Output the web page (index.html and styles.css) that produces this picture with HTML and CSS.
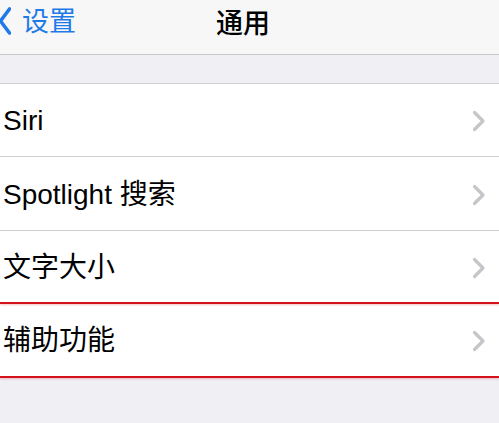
FILE: index.html
```html
<!DOCTYPE html>
<html lang="zh">
<head>
<meta charset="utf-8">
<link rel="stylesheet" href="styles.css">
</head>
<body>
<div class="screen">
  <header class="nav">
    <div class="back">
      <svg class="back-icon" width="12" height="28" viewBox="0 0 12 28"><path d="M10.5 2 L1.5 14 L10.5 26" fill="none" stroke="#1f7ae8" stroke-width="3.6" stroke-linecap="round" stroke-linejoin="round"/></svg>
      <span class="back-text">设置</span>
    </div>
    <div class="title">通用</div>
  </header>
  <div class="spacer"></div>
  <ul class="list">
    <li class="row row-a"><span class="label">Siri</span><svg class="chev" width="14" height="22" viewBox="0 0 14 22"><path d="M2.5 2.5 L11 11 L2.5 19.5" fill="none" stroke="#c6c6ca" stroke-width="3.2" stroke-linecap="round" stroke-linejoin="round"/></svg></li>
    <li class="row row-b"><span class="label">Spotlight 搜索</span><svg class="chev" width="14" height="22" viewBox="0 0 14 22"><path d="M2.5 2.5 L11 11 L2.5 19.5" fill="none" stroke="#c6c6ca" stroke-width="3.2" stroke-linecap="round" stroke-linejoin="round"/></svg></li>
    <li class="row row-before-mark"><span class="label">文字大小</span><svg class="chev" width="14" height="22" viewBox="0 0 14 22"><path d="M2.5 2.5 L11 11 L2.5 19.5" fill="none" stroke="#c6c6ca" stroke-width="3.2" stroke-linecap="round" stroke-linejoin="round"/></svg></li>
    <li class="row row-marked"><span class="label">辅助功能</span><svg class="chev" width="14" height="22" viewBox="0 0 14 22"><path d="M2.5 2.5 L11 11 L2.5 19.5" fill="none" stroke="#c6c6ca" stroke-width="3.2" stroke-linecap="round" stroke-linejoin="round"/></svg></li>
  </ul>
</div>
</body>
</html>
```
FILE: styles.css
```css
* { box-sizing: border-box; }
html, body { margin: 0; padding: 0; }
body {
  width: 499px;
  height: 423px;
  overflow: hidden;
  background: #efeff4;
  font-family: "Liberation Sans", "Noto Sans CJK SC", sans-serif;
  color: #000;
}
.screen { width: 499px; }
.nav {
  height: 55px;
  background: #f7f7f8;
  border-bottom: 1px solid #c9c9cc;
  display: flex;
  align-items: flex-start;
  padding-top: 4px;
}
.back {
  display: flex;
  align-items: center;
  width: 216px;
  color: #1f7ae8;
}
.back-icon { margin-left: -1px; margin-top: 3px; }
.back-text {
  margin-left: 11px;
  font-size: 27px;
  line-height: 30px;
  font-family: "Noto Sans CJK SC", sans-serif;
}
.title {
  font-size: 27px;
  line-height: 30px;
  font-weight: 500;
  margin-top: 3px;
  font-family: "Noto Sans CJK SC", sans-serif;
}
.spacer { height: 28px; }
.list {
  list-style: none;
  margin: 0;
  padding: 0;
  background: #fff;
  border-top: 1px solid #d0d0d4;
}
.row {
  display: flex;
  align-items: center;
  justify-content: space-between;
  padding: 0 13px 0 3px;
  border-bottom: 1px solid #d0d0d4;
}
.row-a { height: 73px; }
.row-b { height: 74px; }
.label {
  font-size: 28px;
  line-height: 34px;
  margin-top: 2px;
}
.row-before-mark {
  height: 73px;
  border-bottom: 2px solid #d4121c;
  box-shadow: 0 1px 2px rgba(230, 80, 90, 0.35);
}
.row-marked {
  height: 74px;
  border-bottom: 2px solid #d4121c;
  box-shadow: 0 1px 2px rgba(230, 80, 90, 0.35);
}
.chev { margin-top: 2px; }
```
